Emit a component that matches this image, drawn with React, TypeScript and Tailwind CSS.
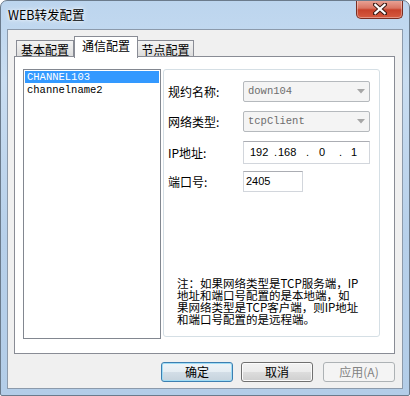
import React from 'react';

const cjk = '[font-family:"Noto_Sans_CJK_SC",sans-serif]';
const mono = '[font-family:"Liberation_Mono","Noto_Sans_CJK_SC",monospace]';
const sans = '[font-family:"Liberation_Sans",Arial,sans-serif]';

const TABS = [
	{ key: 'basic', label: '基本配置', active: false, w: 'w-[58px]' },
	{ key: 'comm', label: '通信配置', active: true, w: 'w-[64px]' },
	{ key: 'node', label: '节点配置', active: false, w: 'w-[57px]' },
];

const CHANNELS = ['CHANNEL103', 'channelname2'];

function CloseButton() {
	return (
		<div className="w-[47px] h-[19px] -mt-px rounded-b-[5px] border border-[#7a2e22] border-t-0 bg-[linear-gradient(#eaa79a,#d97563_45%,#c7422b_55%,#d65b40)] shadow-[inset_0_0_0_1px_rgba(255,255,255,0.35)] flex items-center justify-center">
			<svg width="14" height="12" viewBox="0 0 14 12">
				<path d="M2 1.5 L12 10.5 M12 1.5 L2 10.5" stroke="#3b1a14" strokeWidth="4.2" strokeLinecap="square" />
				<path d="M2.3 1.8 L11.7 10.2 M11.7 1.8 L2.3 10.2" stroke="#ffffff" strokeWidth="2.2" strokeLinecap="square" />
			</svg>
		</div>
	);
}

function Combo({ value }: { value: string }) {
	return (
		<div className="w-[127px] h-[21px] rounded-[2px] border border-[#b5b9bd] bg-[#f4f4f4] flex items-center justify-between pl-[4px] pr-[4px]">
			<span className={`${mono} text-[10.5px] text-[#6d6d6d]`}>{value}</span>
			<svg width="8" height="5" viewBox="0 0 8 5">
				<path d="M0 0 H8 L4 4.5 Z" fill="#a6a6a6" />
			</svg>
		</div>
	);
}

function Button({ label, kind }: { label: string; kind: 'default' | 'normal' | 'disabled' }) {
	const styles = {
		default:
			'border-[#3c7fb1] bg-[linear-gradient(#eef4f8,#e5edf3_50%,#d3dee7_50%,#c6d3dd)] shadow-[inset_0_0_0_1px_#9fdcf5] text-black',
		normal: 'border-[#707070] bg-[linear-gradient(#f2f2f2,#ebebeb_50%,#dddddd_50%,#cfcfcf)] shadow-[inset_0_0_0_1px_#fbfbfb] text-black',
		disabled: 'border-[#adb2b5] bg-[#f4f4f4] text-[#838383]',
	}[kind];
	return (
		<div className={`w-[72px] h-[20px] rounded-[3px] border flex items-center justify-center ${cjk} text-[12px] leading-none ${styles}`}>
			{label}
		</div>
	);
}

export default function App() {
	return (
		<div className="w-[410px] h-[396px] box-border border border-[#6b7b8c] rounded-t-[7px] rounded-b-[2px] bg-[linear-gradient(#bcd5ee,#c9ddf1_20%,#b7d0ea_60%,#b3cde8)] flex flex-col overflow-hidden">
			{/* Title bar */}
			<div className="h-[28px] flex justify-between pl-[7px] pr-[6px] shrink-0">
				<div className={`${cjk} text-[12.5px] leading-none pt-[8px] text-black [text-shadow:0_0_6px_white,0_0_3px_white]`}>
					WEB转发配置
				</div>
				<CloseButton />
			</div>

			{/* Client */}
			<div className="mx-[6px] h-[360px] border border-[#8c9aab] bg-[#f0f0f0] pt-[6px] pl-[6px] flex flex-col shrink-0">
				{/* Tabs */}
				<div className="flex items-end h-[20px] pl-[2px]">
					{TABS.map((t) =>
						t.active ? (
							<div
								key={t.key}
								className={`${t.w} h-[22px] -mb-[2px] relative z-10 bg-white border border-b-0 border-[#898c95] ${cjk} text-[12px] leading-none flex justify-center pt-[3px] text-black`}
							>
								{t.label}
							</div>
						) : (
							<div
								key={t.key}
								className={`${t.w} h-[16px] ${t.key === 'node' ? '-ml-px' : ''} bg-[linear-gradient(#f3f3f3,#e9e9e9_50%,#dcdcdc)] border border-b-0 border-[#898c95] ${cjk} text-[12px] leading-none flex justify-center pt-[3px] text-black`}
							>
								{t.label}
							</div>
						)
					)}
				</div>

				{/* Tab page */}
				<div className="w-[381px] h-[298px] border border-[#898c95] bg-white flex items-start pl-[8px] pt-[12px]">
					<div className="w-[138px] h-[270px] border border-[#828790] p-px">
						{CHANNELS.map((c, i) => (
							<div
								key={c}
								className={`h-[12px] leading-[12px] pl-[2px] ${mono} text-[10.5px] ${
									i === 0 ? 'bg-[#3399ff] text-white' : 'text-black mt-px'
								}`}
							>
								{c}
							</div>
						))}
					</div>

					<div className="ml-[2px] w-[217px] h-[268px] border border-[#d5dfe5] rounded-[3px] flex flex-col pl-[4px] pt-[11px]">
						<div className="h-[30px] flex items-start">
							<div className={`w-[75px] leading-[21px] ${cjk} text-[12px] text-black`}>规约名称:</div>
							<Combo value="down104" />
						</div>
						<div className="h-[30px] flex items-start">
							<div className={`w-[75px] leading-[21px] ${cjk} text-[12px] text-black`}>网络类型:</div>
							<Combo value="tcpClient" />
						</div>
						<div className="h-[30px] flex items-start">
							<div className={`w-[75px] leading-[23px] ${cjk} text-[12px] text-black`}>IP地址:</div>
							<div className={`w-[127px] h-[23px] border border-[#d2d6dc] border-t-[#abadb3] bg-white flex items-center pl-[6px] ${sans} text-[11px] text-black`}>
								<span className="w-[24px]">192</span>
								<span className="w-[4px]">.</span>
								<span className="w-[28px]">168</span>
								<span className="w-[4px]">.</span>
								<span className="w-[29px] pl-[9px]">0</span>
								<span className="w-[4px]">.</span>
								<span className="pl-[8px]">1</span>
							</div>
						</div>
						<div className="h-[30px] flex items-start">
							<div className={`w-[75px] leading-[21px] ${cjk} text-[12px] text-black`}>端口号:</div>
							<div className={`w-[60px] h-[21px] border border-[#d2d6dc] border-t-[#abadb3] bg-white flex items-center pl-[2px] ${sans} text-[11px] text-black`}>
								2405
							</div>
						</div>

						<div className={`mt-auto mb-[11px] pl-[9px] ${cjk} text-[11.5px] leading-[12px] text-black whitespace-nowrap`}>
							<div>注：如果网络类型是TCP服务端，IP</div>
							<div>地址和端口号配置的是本地端，如</div>
							<div>果网络类型是TCP客户端，则IP地址</div>
							<div>和端口号配置的是远程端。</div>
						</div>
					</div>
				</div>

				{/* Buttons */}
				<div className="w-[381px] mt-[8px] flex justify-end">
					<Button label="确定" kind="default" />
					<div className="ml-[8px] w-[73px]">
						<Button label="取消" kind="normal" />
					</div>
					<div className="ml-[9px]">
						<Button label="应用(A)" kind="disabled" />
					</div>
				</div>
			</div>
		</div>
	);
}
